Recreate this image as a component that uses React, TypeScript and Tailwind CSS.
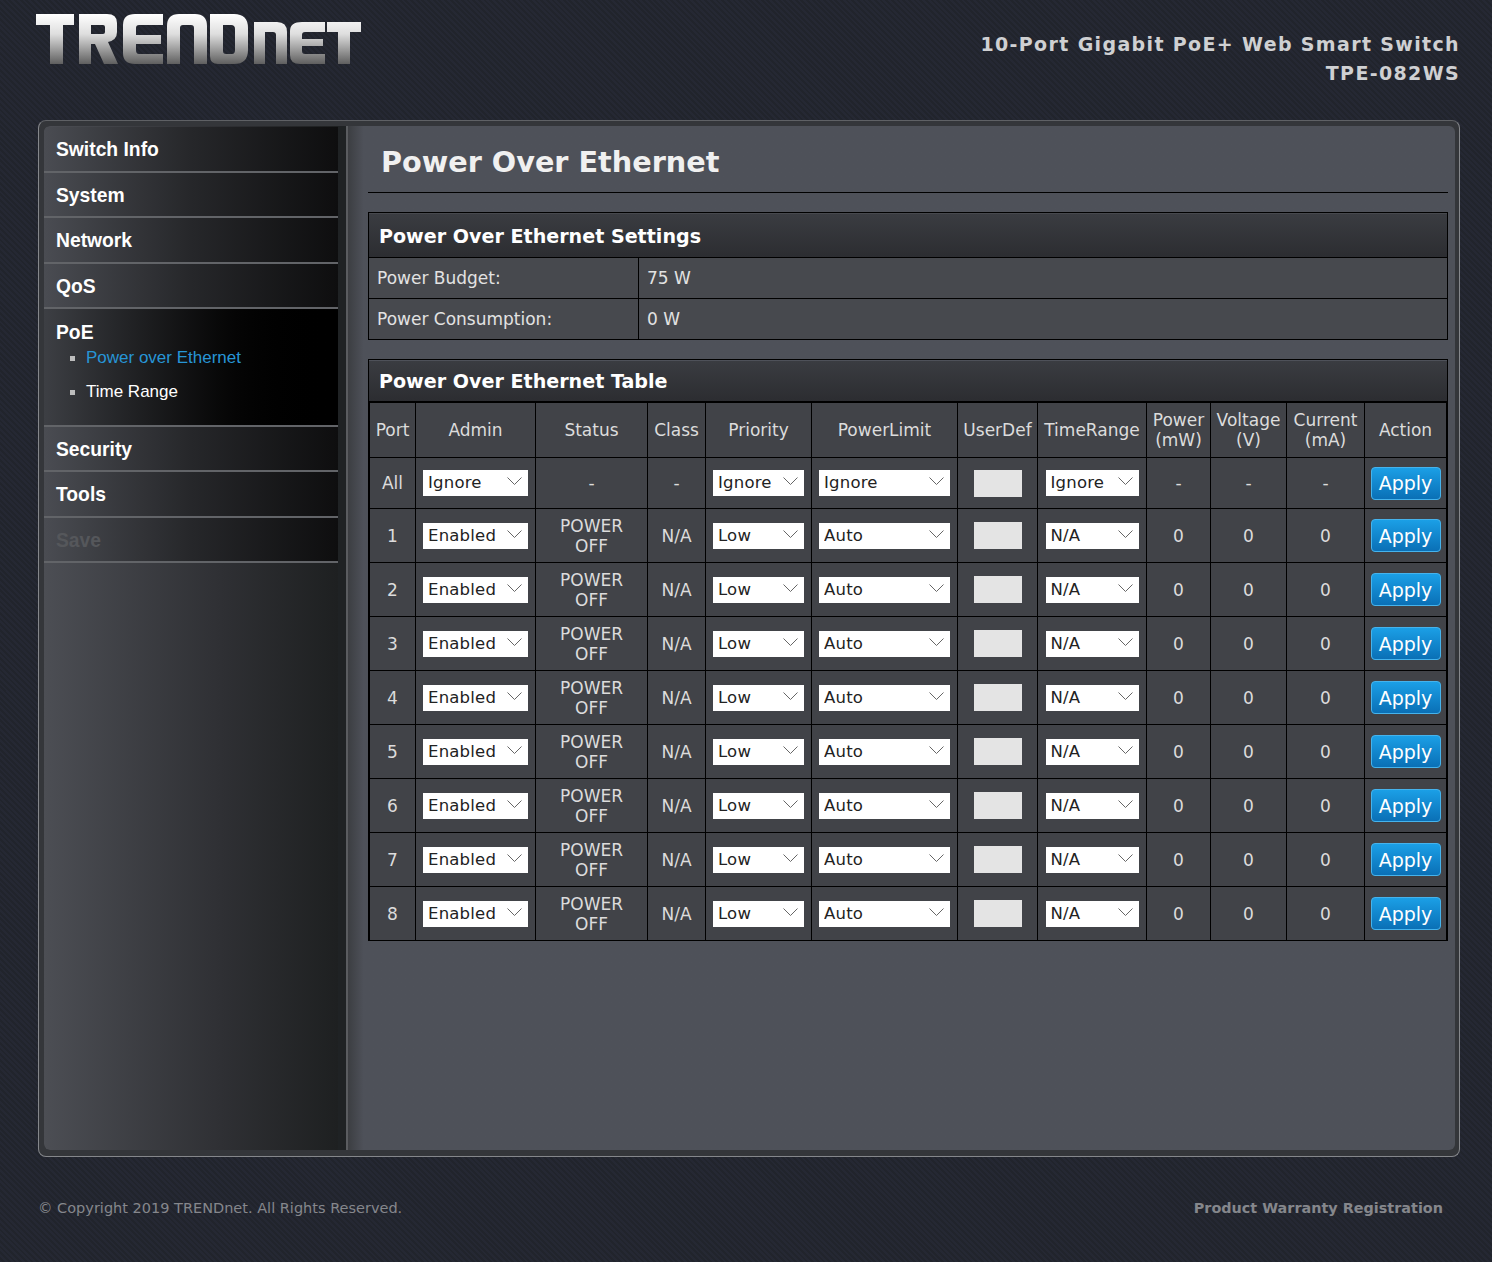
const verdana = "font-['DejaVu_Sans',sans-serif]"

const navTop = ["Switch Info", "System", "Network", "QoS"]
const navBottom = ["Security", "Tools"]

const ports = [1, 2, 3, 4, 5, 6, 7, 8]

function Logo() {
  return (
    <svg width="330" height="54" viewBox="0 0 330 54" aria-label="TRENDnet logo">
      <defs>
        <linearGradient id="chrome" gradientUnits="userSpaceOnUse" x1="0" y1="1" x2="0" y2="51">
          <stop offset="0" stopColor="#ffffff" />
          <stop offset="0.4" stopColor="#dedede" />
          <stop offset="1" stopColor="#5f5f5f" />
        </linearGradient>
      </defs>
      <g fill="url(#chrome)" fillRule="evenodd">
        <path d="M1 1H39V12H28V51H15V12H1Z" />
        <path d="M44 1H72Q82 1 82 10V19Q82 27 73 29L83 51H69L60 31H56V51H44ZM56 12V21H68Q70 21 70 19V14Q70 12 68 12Z" />
        <path d="M100 1H128V12H104Q101 12 101 15V22H126V31H101V37Q101 41 104 41H128V51H100Q88 51 88 40V12Q88 1 100 1Z" />
        <path d="M132 51V13Q132 1 144 1H160Q172 1 172 13V51H159V15Q159 12 156 12H148Q145 12 145 15V51Z" />
        <path d="M175 1H199Q213 1 213 15V37Q213 51 199 51H183Q175 51 175 43ZM188 12V38Q188 41 191 41H197Q200 41 200 37V16Q200 12 196 12Z" />
        <path d="M219 51V9H242Q252 9 252 19V51H241V22Q241 19 238 19H230V51Z" />
        <path d="M267 9H290V19H270Q267 19 267 22V26H288V33H267V38Q267 41 270 41H290V51H265Q255 51 255 42V18Q255 9 267 9Z" />
        <path d="M292 9H326V19H315V51H303V19H292Z" />
      </g>
    </svg>
  )
}

function NavItem({ label, muted }: { label: string; muted?: boolean }) {
  return (
    <div
      className={`flex h-[45.5px] items-center border-b-2 border-[#626468] bg-gradient-to-r from-[#4a4c52] via-[#26272a] via-50% to-[#0e0e0f] pl-3 pt-[4px] font-['Liberation_Sans',sans-serif] text-[19.3px] font-bold ${
        muted ? "text-[#55575b]" : "text-white"
      }`}
    >
      {label}
    </div>
  )
}

function Select({ value, width }: { value: string; width: string }) {
  return (
    <div className={`relative mx-auto h-[26px] ${width}`}>
      <select
        defaultValue={value}
        className={`h-full w-full appearance-none bg-white pl-[5px] text-[16.5px] tracking-[0.2px] text-[#222] ${verdana}`}
      >
        <option>{value}</option>
      </select>
      <svg
        width="15"
        height="8"
        viewBox="0 0 15 8"
        fill="none"
        stroke="#666"
        className="pointer-events-none absolute right-[6px] top-[7px]"
      >
        <path d="M0.5 0.5L7.5 7.5L14.5 0.5" />
      </svg>
    </div>
  )
}

function ApplyButton() {
  return (
    <button className="h-[33px] w-[70px] rounded-[4px] border border-[#46b3ec] bg-gradient-to-b from-[#1b9fe6] to-[#0a70b6] text-[19px] text-white">
      Apply
    </button>
  )
}

function UserDef() {
  return <div className="mx-auto h-[27px] w-[48px] bg-[#e4e4e4]" />
}

const th = "border border-black bg-[#414348] font-normal"
const td = "border border-black bg-[#414348] text-center"

function SectionTitle({ children, height }: { children: string; height: string }) {
  return (
    <div
      className={`flex items-center border-b border-black bg-gradient-to-b from-[#3a3c41] to-[#2c2d31] pl-[10px] pt-[3px] text-[19.1px] font-bold text-white ${height}`}
    >
      {children}
    </div>
  )
}

export default function App() {
  return (
    <div
      className={`min-h-[1262px] w-[1492px] bg-[#23262f] bg-[repeating-linear-gradient(45deg,#252833_0,#252833_2px,#21242c_2px,#21242c_4px)] ${verdana}`}
    >
      <header className="flex h-[120px] items-start justify-between pl-[35px] pr-[32px]">
        <div className="pt-[13px]">
          <Logo />
        </div>
        <div className="pt-[30px] text-right text-[19px] font-bold leading-[29px] tracking-[1.35px] text-[#cfd0d2]">
          <div>10-Port Gigabit PoE+ Web Smart Switch</div>
          <div>TPE-082WS</div>
        </div>
      </header>

      <main className="ml-[38px] mr-[32px] h-[1037px] rounded-[8px] border border-[#85878b] border-t-[#5f6165] bg-[#34363a] pb-[6px] pl-[5px] pr-[4px] pt-[5px]">
        <div className="flex h-full overflow-hidden rounded-[6px]">
          <aside className="flex w-[304px] shrink-0 border-r-2 border-[#5a5c60] bg-[#1f2224]">
            <nav className="flex w-[294px] flex-col bg-gradient-to-r from-[#4c4e54] via-[#2f3034] via-60% to-[#1e2021] pt-px">
              {navTop.map((item) => (
                <NavItem key={item} label={item} />
              ))}
              <div className="h-[117.5px] border-b-2 border-[#626468] bg-gradient-to-r from-[#3d3f44] via-[#050505] via-65% to-black pl-3 pt-[12px] font-['Liberation_Sans',sans-serif]">
                <div className="text-[19.3px] font-bold leading-[23px] text-white">PoE</div>
                <ul className="mt-[2px] pl-[14px] text-[17px]">
                  <li className="flex h-[24px] items-center">
                    <span className="mr-[11px] size-[5px] bg-[#bdbdbd]" />
                    <span className="text-[#2795d6]">Power over Ethernet</span>
                  </li>
                  <li className="mt-[10px] flex h-[24px] items-center">
                    <span className="mr-[11px] size-[5px] bg-[#bdbdbd]" />
                    <span className="text-white">Time Range</span>
                  </li>
                </ul>
              </div>
              {navBottom.map((item) => (
                <NavItem key={item} label={item} />
              ))}
              <NavItem label="Save" muted />
            </nav>
          </aside>

          <section className="flex-1 bg-gradient-to-r from-[#3c3e42] via-[#4e5159] via-[1.4%] to-[#4e5159] pl-[20px] pr-[7px]">
            <h1 className="flex h-[67px] items-center border-b border-black pl-[13px] pt-[7px] text-[28.7px] font-bold text-[#f0f0f0]">
              Power Over Ethernet
            </h1>

            <div className="mt-[19px] border border-black bg-[#47494e] pt-px text-[17px] text-[#e2e2e2]">
              <SectionTitle height="h-[44px]">Power Over Ethernet Settings</SectionTitle>
              <div className="flex h-[41px] border-b border-black">
                <div className="flex w-[270px] items-center border-r border-black pl-2 pt-[2px]">Power Budget:</div>
                <div className="flex items-center pl-2 pt-[2px]">75 W</div>
              </div>
              <div className="flex h-[40px]">
                <div className="flex w-[270px] items-center border-r border-black pl-2 pt-[2px]">Power Consumption:</div>
                <div className="flex items-center pl-2 pt-[2px]">0 W</div>
              </div>
            </div>

            <div className="mt-[19px] border-x border-t border-black pt-px">
              <SectionTitle height="h-[41px]">Power Over Ethernet Table</SectionTitle>
              <table className="w-full table-fixed border-collapse text-[17px] leading-[20px] text-[#dcdcdc]">
                <thead>
                  <tr className="h-[55px]">
                    <th className={`${th} w-[46px]`}>Port</th>
                    <th className={`${th} w-[120px]`}>Admin</th>
                    <th className={`${th} w-[112px]`}>Status</th>
                    <th className={`${th} w-[58px]`}>Class</th>
                    <th className={`${th} w-[106px]`}>Priority</th>
                    <th className={`${th} w-[146px]`}>PowerLimit</th>
                    <th className={`${th} w-[80px]`}>UserDef</th>
                    <th className={`${th} w-[109px]`}>TimeRange</th>
                    <th className={`${th} w-[64px]`}>Power<br />(mW)</th>
                    <th className={`${th} w-[76px]`}>Voltage<br />(V)</th>
                    <th className={`${th} w-[78px]`}>Current<br />(mA)</th>
                    <th className={th}>Action</th>
                  </tr>
                </thead>
                <tbody>
                  <tr className="h-[51px]">
                    <td className={td}>All</td>
                    <td className={td}><Select value="Ignore" width="w-[105px]" /></td>
                    <td className={td}>-</td>
                    <td className={td}>-</td>
                    <td className={td}><Select value="Ignore" width="w-[91px]" /></td>
                    <td className={td}><Select value="Ignore" width="w-[131px]" /></td>
                    <td className={td}><UserDef /></td>
                    <td className={td}><Select value="Ignore" width="w-[93px]" /></td>
                    <td className={td}>-</td>
                    <td className={td}>-</td>
                    <td className={td}>-</td>
                    <td className={td}><ApplyButton /></td>
                  </tr>
                  {ports.map((port) => (
                    <tr key={port} className="h-[54px]">
                      <td className={td}>{port}</td>
                      <td className={td}><Select value="Enabled" width="w-[105px]" /></td>
                      <td className={td}>POWER<br />OFF</td>
                      <td className={td}>N/A</td>
                      <td className={td}><Select value="Low" width="w-[91px]" /></td>
                      <td className={td}><Select value="Auto" width="w-[131px]" /></td>
                      <td className={td}><UserDef /></td>
                      <td className={td}><Select value="N/A" width="w-[93px]" /></td>
                      <td className={td}>0</td>
                      <td className={td}>0</td>
                      <td className={td}>0</td>
                      <td className={td}><ApplyButton /></td>
                    </tr>
                  ))}
                </tbody>
              </table>
            </div>
          </section>
        </div>
      </main>

      <footer className="flex items-center justify-between pl-[38px] pr-[49px] pt-[41px] text-[#85878c]">
        <span className="text-[14.5px]">© Copyright 2019 TRENDnet. All Rights Reserved.</span>
        <span className="text-[14.4px] font-bold">Product Warranty Registration</span>
      </footer>
    </div>
  )
}
